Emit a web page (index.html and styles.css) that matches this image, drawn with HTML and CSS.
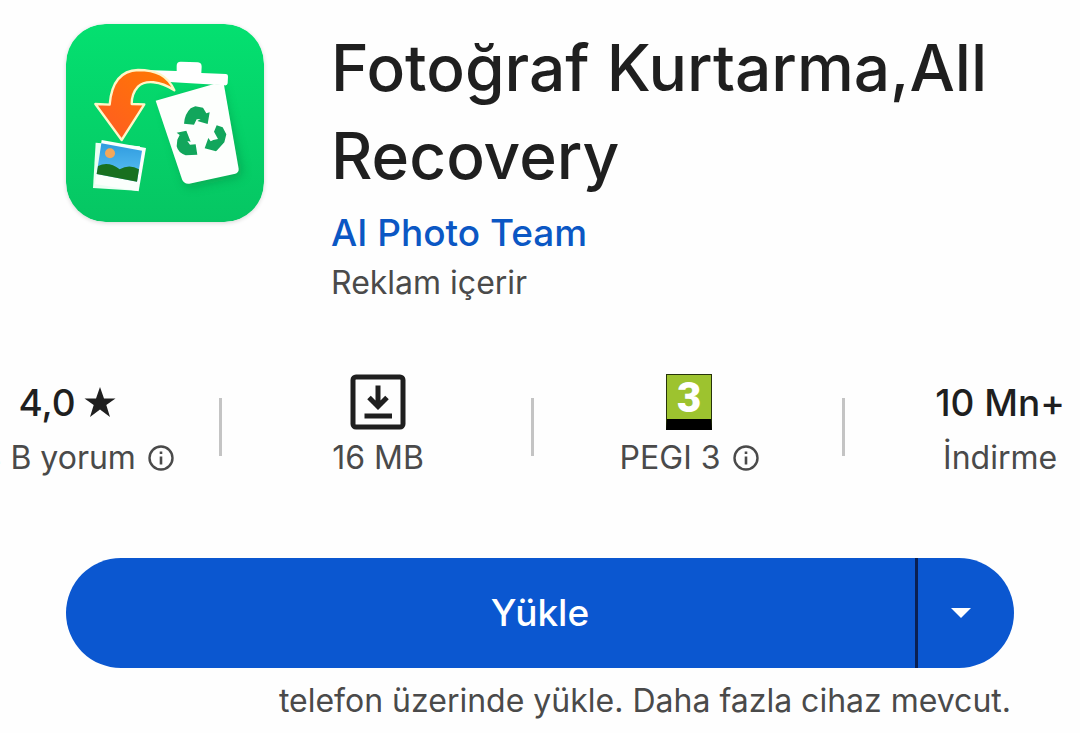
FILE: index.html
```html
<!DOCTYPE html>
<html lang="tr">
<head>
<meta charset="utf-8">
<meta name="viewport" content="width=device-width, initial-scale=1">
<title>Fotoğraf Kurtarma,All Recovery</title>
<link rel="stylesheet" href="styles.css">
</head>
<body>
<main class="page">
  <header class="app">
    <svg class="app-icon" viewBox="30 30 594 594" aria-hidden="true">
      <defs>
        <linearGradient id="bg" x1="0" y1="0" x2="0" y2="1">
          <stop offset="0" stop-color="#04e070"/><stop offset="1" stop-color="#06c663"/>
        </linearGradient>
        <linearGradient id="arrow" x1="1" y1="0" x2="0" y2="1">
          <stop offset="0" stop-color="#ff7a00"/><stop offset="1" stop-color="#ff5a24"/>
        </linearGradient>
        <linearGradient id="sky" x1="0" y1="0" x2="0" y2="1">
          <stop offset="0" stop-color="#2f9be0"/><stop offset="1" stop-color="#5fc4f4"/>
        </linearGradient>
        <filter id="soft" x="-20%" y="-20%" width="150%" height="150%"><feGaussianBlur stdDeviation="14"/></filter>
      </defs>
      <rect x="30" y="30" width="594" height="594" rx="116" fill="url(#bg)"/>
      <path d="M320 265L500 215L560 470Q560 490 535 494L410 520Q390 520 384 505Z" fill="#079448" opacity=".55" filter="url(#soft)"/>
      <path d="M270 168L362 171V155Q362 143 374 143L426 145Q437 146 437 158L436 177L510 180Q517 181 516 188L515 208Q514 215 506 214L340 204L290 185Z" fill="#fff"/>
      <path d="M299 260L474 210L504 213L548 464Q549 475 538 479L400 509Q384 511 378 496Z" fill="#fdfffd"/>
      <g fill="#12a65c">
        <path d="M384 329Q386 300 404 283L418 277L441 281L451 298L461 295L455 330L424 321L434 315L422 316L414 332Z"/>
        <path d="M482 334L500 340L511 361L505 385L484 408L480 412L446 403L457 372L464 382L472 378L486 375L474 353Z"/>
        <path d="M362 356L391 350L404 383L394 381L402 392L419 391L424 422L389 424Q366 416 362 397L364 377L371 363Z"/>
      </g>
      <path d="M118 270L161 272C166 207 193 170 246 168C300 168 334 184 355 229C312 200 267 197 246 218C231 234 227 252 227 270L265 271L197 378Z" fill="url(#arrow)" stroke="#fff6c8" stroke-width="7" stroke-linejoin="round"/>
      <path d="M119 386L252 397L242 530L111 522Z" fill="#eafff3"/>
      <path d="M137 378L270 402L248 532L117 510Z" fill="#fbfffc"/>
      <path d="M136 388L258 410L243 503L122 480Z" fill="url(#sky)"/>
      <circle cx="162" cy="418" r="15" fill="#f2a75b"/>
      <path d="M126 456Q158 440 191 466Q220 449 249 466L243 503L122 480Z" fill="#18701f"/>
    </svg>
    <div class="app-info">
      <h1 class="title">Fotoğraf Kurtarma,All Recovery</h1>
      <a class="developer" href="#">AI Photo Team</a>
      <p class="ads">Reklam içerir</p>
    </div>
  </header>

  <section class="stats-viewport">
    <ul class="stats">
      <li class="stat">
        <div class="value">4,0
          <svg class="star" viewBox="0 0 32 32" aria-hidden="true"><path fill="currentColor" d="M16 1L20 12.400H31.500L22.300 19L26 31L16 23.500L6 31L9.700 19L.5 12.400H12Z"/></svg>
        </div>
        <div class="label">44 B yorum
          <svg class="info" viewBox="0 0 26 26" aria-hidden="true"><circle cx="13" cy="13" r="11.500" fill="none" stroke="currentColor" stroke-width="2.400"/><path fill="currentColor" d="M11.700 6.500h2.600v2.600h-2.600zM11.700 11.500h2.600v8h-2.600z"/></svg>
        </div>
      </li>
      <li class="stat">
        <div class="value">
          <svg class="download" viewBox="0 0 56 56" aria-hidden="true"><rect x="3" y="3" width="50" height="50" rx="3" fill="none" stroke="currentColor" stroke-width="5"/><path fill="none" stroke="currentColor" stroke-width="5" d="M28 11.500V33M19 23.500L28 32.500L37 23.500M14.500 42H42"/></svg>
        </div>
        <div class="label">16 MB</div>
      </li>
      <li class="stat">
        <div class="value"><span class="pegi">3</span></div>
        <div class="label">PEGI 3
          <svg class="info" viewBox="0 0 26 26" aria-hidden="true"><circle cx="13" cy="13" r="11.500" fill="none" stroke="currentColor" stroke-width="2.400"/><path fill="currentColor" d="M11.700 6.500h2.600v2.600h-2.600zM11.700 11.500h2.600v8h-2.600z"/></svg>
        </div>
      </li>
      <li class="stat">
        <div class="value">10 Mn+</div>
        <div class="label">İndirme</div>
      </li>
    </ul>
  </section>

  <section class="install">
    <div class="install-bar">
      <button class="install-main" type="button">Yükle</button>
      <button class="install-more" type="button" aria-label="Diğer cihazlar">
        <svg class="caret" viewBox="0 0 20 10" aria-hidden="true"><path fill="#fff" d="M0 0H20L10 10Z"/></svg>
      </button>
    </div>
    <p class="note">telefon üzerinde yükle. Daha fazla cihaz mevcut.</p>
  </section>
</main>
</body>
</html>
```
FILE: styles.css
```css
* { box-sizing: border-box; }
body {
  margin: 0;
  background: #fefefe;
  color: #1f1f1f;
  font-family: Inter, Roboto, sans-serif;
}
.page { overflow: hidden; }
.app {
  display: flex;
  align-items: flex-start;
  gap: 67px;
  padding: 24px 66px 0;
}
.app-icon {
  flex: none;
  width: 198px;
  height: 198px;
  border-radius: 40px;
  box-shadow: 0 1px 4px rgba(0, 0, 0, .16);
}
.app-info { flex: 1; min-width: 0; }
.title {
  margin: 0;
  font-size: 64px;
  line-height: 88px;
  font-weight: 500;
}
.developer {
  display: block;
  margin-top: 8px;
  color: #0b57c4;
  font-size: 37px;
  line-height: 50px;
  font-weight: 500;
  text-decoration: none;
}
.ads {
  margin: 0;
  color: #4a4a4a;
  font-size: 32px;
  line-height: 50px;
}
.stats-viewport { margin-top: 66px; }
.stats {
  display: grid;
  grid-template-columns: repeat(4, 1fr);
  width: 115.200%;
  margin: 0 0 0 -8.200%;
  padding: 0;
  list-style: none;
}
.stat {
  display: flex;
  flex-direction: column;
  align-items: center;
  position: relative;
}
.stat:not(:last-child)::after {
  content: "";
  position: absolute;
  top: 24px;
  right: 0;
  width: 3px;
  height: 58px;
  background: #c4c4c4;
}
.value, .label {
  display: flex;
  align-items: center;
  white-space: nowrap;
}
.value {
  gap: 8px;
  height: 56px;
  font-size: 37px;
  font-weight: 500;
}
.label {
  gap: 12px;
  color: #4a4a4a;
  font-size: 32px;
  line-height: 56px;
}
.star { width: 32px; height: 32px; }
.info { width: 26px; height: 26px; }
.download { width: 56px; height: 56px; }
.pegi {
  width: 46px;
  height: 56px;
  border: 1px solid #26330a;
  border-bottom: 11px solid #000;
  background: #9dc32f;
  color: #fff;
  font: 900 42px/46px Roboto, sans-serif;
  text-align: center;
}
.install { padding: 72px 66px 0; }
.install-bar {
  display: flex;
  height: 110px;
  border-radius: 55px;
  overflow: hidden;
  background: #0b57d0;
}
.install-main, .install-more {
  border: 0;
  padding: 0;
  background: none;
  color: #fff;
  font: 500 37px/50px Inter, Roboto, sans-serif;
}
.install-main {
  flex: 1;
  padding-left: 99px;
}
.install-more {
  display: flex;
  align-items: center;
  justify-content: center;
  width: 99px;
  padding-right: 10px;
  border-left: 3px solid #0a1f52;
}
.caret { width: 20px; height: 10px; }
.note {
  margin: 8px 0 0;
  padding-right: 3px;
  color: #4a4a4a;
  font-size: 32px;
  line-height: 50px;
  text-align: right;
  white-space: nowrap;
}
```
